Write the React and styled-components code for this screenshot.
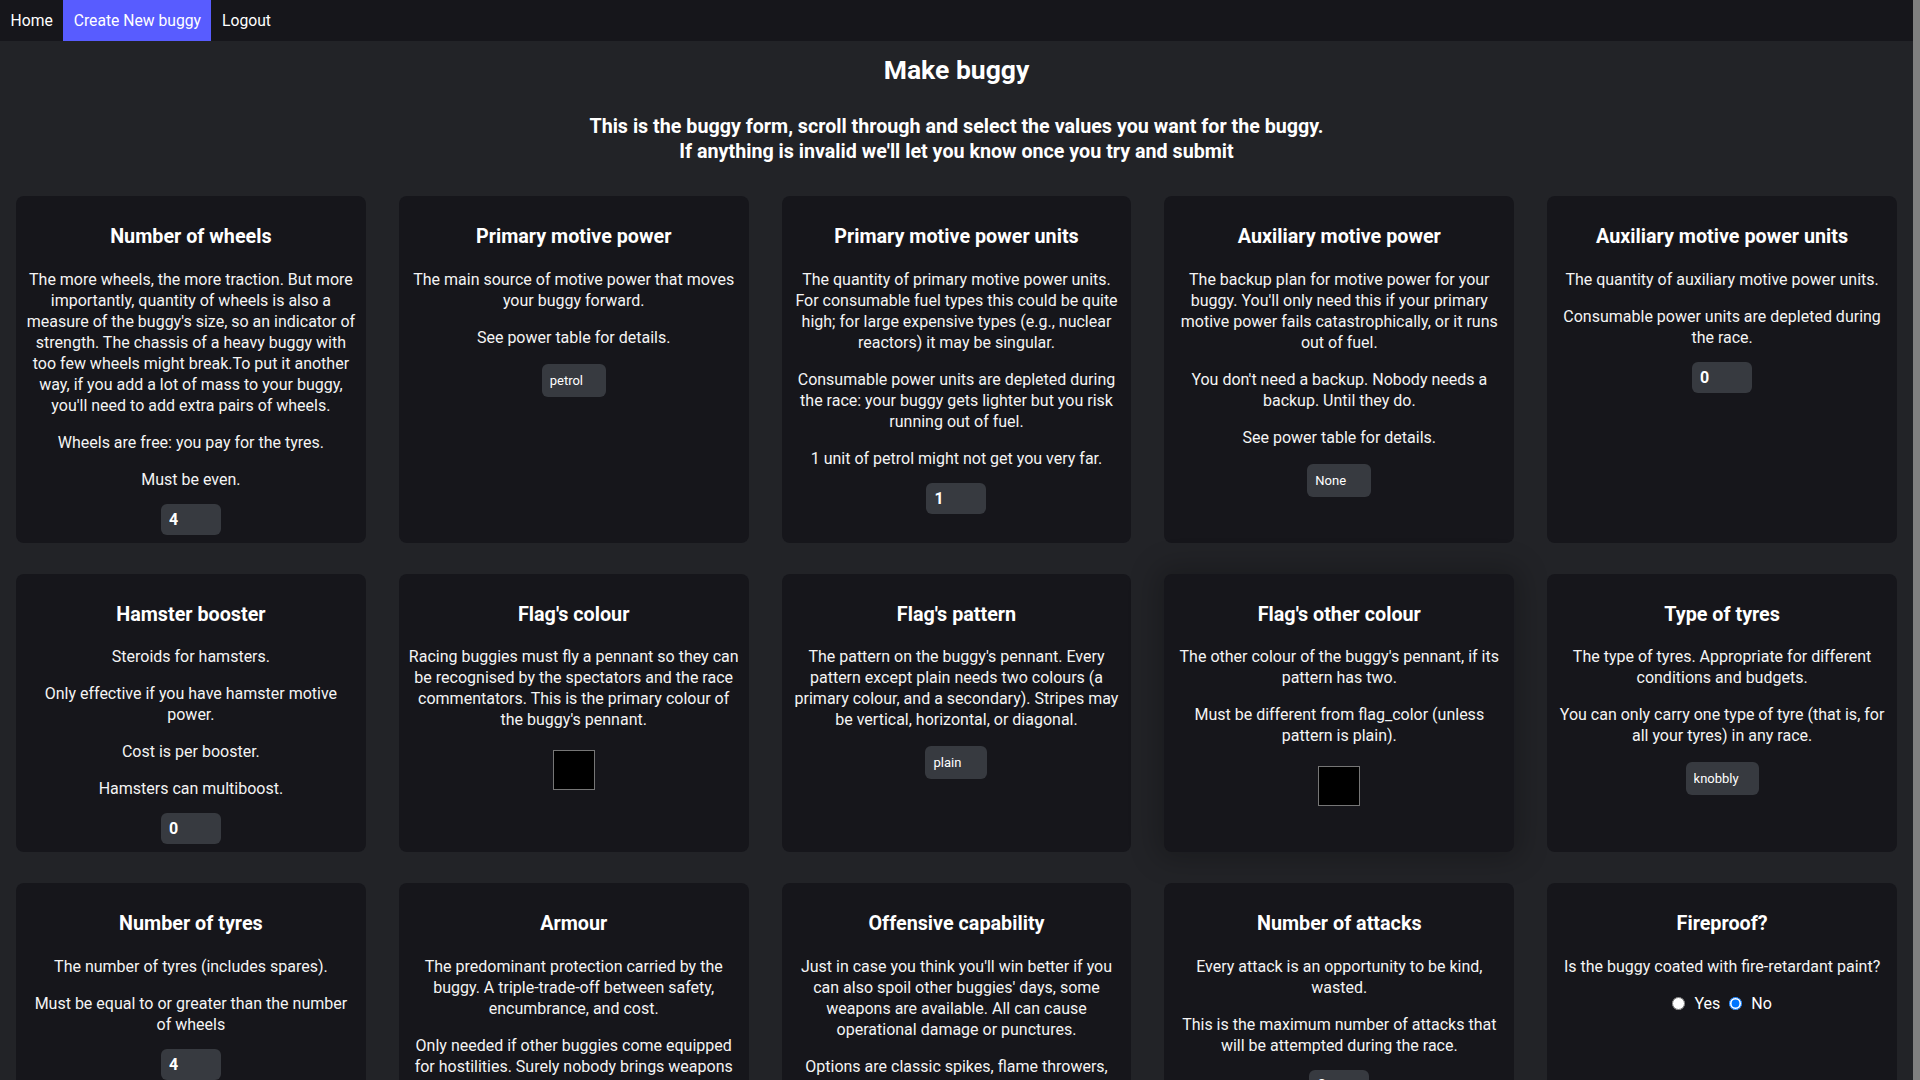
import React from "react";
import styled, { createGlobalStyle } from "styled-components";

const FONT = `"Segoe UI", Roboto, "Noto Sans", "Liberation Sans", sans-serif`;

const GlobalStyle = createGlobalStyle`
  html {
    margin: 0;
    padding: 0;
    background: #222327 linear-gradient(to left, #7f7f7f 7px, #222327 7px) fixed;
  }
  body { margin: 0; padding: 0; font-family: ${FONT}; color: #fff; }
  * { box-sizing: border-box; }
`;

const Page = styled.div`
  margin-right: 7px;
  background: #222327;
  min-height: 100vh;
`;

const NavBar = styled.nav`
  display: flex;
  height: 41px;
  background: #16161b;
`;

const NavLink = styled.a`
  display: flex;
  align-items: center;
  padding: 0 10.5px;
  font-size: 15.7px;
  color: #fff;
  text-decoration: none;
  background: ${(p) => (p.$active ? "#585cff" : "transparent")};
`;

const Main = styled.main`
  padding: 0 16px 40px;
`;

const PageTitle = styled.h1`
  margin: 13px 0 0;
  text-align: center;
  font-size: 26.5px;
  line-height: 32px;
  font-weight: 700;
`;

const Intro = styled.p`
  margin: 27.5px 0 0;
  text-align: center;
  font-size: 19.7px;
  line-height: 25px;
  font-weight: 700;
`;

const Grid = styled.div`
  display: grid;
  grid-template-columns: repeat(5, 1fr);
  column-gap: 33px;
  row-gap: 31px;
  margin-top: 32.5px;
`;

const Card = styled.section`
  background: #16161b;
  border-radius: 8px;
  padding: 29px 8px 8px;
  text-align: center;
  box-shadow: ${(p) => (p.$raised ? "0 0 28px 8px rgba(0,0,0,0.22)" : "none")};
`;

const CardTitle = styled.h2`
  margin: 0 0 19.5px;
  font-size: 19.75px;
  line-height: 24px;
  font-weight: 700;
`;

const Text = styled.p`
  margin: 0 0 16px;
  font-size: 16px;
  line-height: 21px;
  color: #f4f4f4;
`;

const Field = styled.div`
  display: flex;
  justify-content: center;
  align-items: center;
  gap: 9px;
  font-size: 16px;
  line-height: 21px;
`;

const NumberInput = styled.input`
  width: 60px;
  height: 31px;
  margin-top: -2px;
  border: none;
  border-radius: 6px;
  background: #373a40;
  color: #fff;
  font: 700 16px ${FONT};
  padding: 0 8px;
  outline: none;
`;

const Select = styled.select`
  appearance: none;
  -webkit-appearance: none;
  width: ${(p) => p.$w}px;
  height: 33px;
  border: none;
  border-radius: 6px;
  background: #373a40;
  color: #fff;
  font: 400 13px ${FONT};
  padding: 0 8px;
  outline: none;
`;

const Swatch = styled.input`
  -webkit-appearance: none;
  appearance: none;
  width: 42px;
  height: 40px;
  margin-top: 4px;
  padding: 0;
  border: 1px solid #767676;
  background: #000;
  &::-webkit-color-swatch-wrapper { padding: 0; }
  &::-webkit-color-swatch { border: none; }
`;

const RadioLabel = styled.label`
  display: inline-flex;
  align-items: center;
  gap: 9px;
`;

const Radio = styled.input`
  width: 13px;
  height: 13px;
  margin: 0;
  accent-color: #0075ff;
`;

const cards = [
  { title: "Number of wheels", text: ["The more wheels, the more traction. But more importantly, quantity of wheels is also a measure of the buggy's size, so an indicator of strength. The chassis of a heavy buggy with too few wheels might break.To put it another way, if you add a lot of mass to your buggy, you'll need to add extra pairs of wheels.", "Wheels are free: you pay for the tyres.", "Must be even."], kind: "number", value: 4 },
  { title: "Primary motive power", text: ["The main source of motive power that moves your buggy forward.", "See power table for details."], kind: "select", value: "petrol", w: 64, options: ["petrol", "fusion", "steam", "bio", "electric", "rocket", "hamster", "thermo", "solar", "wind"] },
  { title: "Primary motive power units", text: ["The quantity of primary motive power units. For consumable fuel types this could be quite high; for large expensive types (e.g., nuclear reactors) it may be singular.", "Consumable power units are depleted during the race: your buggy gets lighter but you risk running out of fuel.", "1 unit of petrol might not get you very far."], kind: "number", value: 1 },
  { title: "Auxiliary motive power", text: ["The backup plan for motive power for your buggy. You'll only need this if your primary motive power fails catastrophically, or it runs out of fuel.", "You don't need a backup. Nobody needs a backup. Until they do.", "See power table for details."], kind: "select", value: "None", w: 64, options: ["None", "petrol", "fusion", "steam", "bio", "electric", "rocket", "hamster", "thermo", "solar", "wind"] },
  { title: "Auxiliary motive power units", text: ["The quantity of auxiliary motive power units.", "Consumable power units are depleted during the race."], kind: "number", value: 0 },
  { title: "Hamster booster", text: ["Steroids for hamsters.", "Only effective if you have hamster motive power.", "Cost is per booster.", "Hamsters can multiboost."], kind: "number", value: 0 },
  { title: "Flag's colour", text: ["Racing buggies must fly a pennant so they can be recognised by the spectators and the race commentators. This is the primary colour of the buggy's pennant."], kind: "color" },
  { title: "Flag's pattern", text: ["The pattern on the buggy's pennant. Every pattern except plain needs two colours (a primary colour, and a secondary). Stripes may be vertical, horizontal, or diagonal."], kind: "select", value: "plain", w: 62, options: ["plain", "vstripe", "hstripe", "dstripe", "checker", "spot"] },
  { title: "Flag's other colour", text: ["The other colour of the buggy's pennant, if its pattern has two.", "Must be different from flag_color (unless pattern is plain)."], kind: "color", raised: true },
  { title: "Type of tyres", text: ["The type of tyres. Appropriate for different conditions and budgets.", "You can only carry one type of tyre (that is, for all your tyres) in any race."], kind: "select", value: "knobbly", w: 73, options: ["knobbly", "slick", "steelband", "reactive", "maglev"] },
  { title: "Number of tyres", text: ["The number of tyres (includes spares).", "Must be equal to or greater than the number of\u00a0wheels"], kind: "number", value: 4 },
  { title: "Armour", text: ["The predominant protection carried by the buggy. A triple-trade-off between safety, encumbrance, and cost.", "Only needed if other buggies come equipped for hostilities. Surely nobody brings weapons to a friendly race?"], kind: "select", value: "none", w: 62, options: ["none", "wood", "aluminium", "thinsteel", "thicksteel", "titanium"] },
  { title: "Offensive capability", text: ["Just in case you think you'll win better if you can also spoil other buggies' days, some weapons are available. All can cause operational damage or punctures.", "Options are classic spikes, flame throwers, charge weapons, or biohazards."], kind: "select", value: "none", w: 62, options: ["none", "spike", "flame", "charge", "biohazard"] },
  { title: "Number of attacks", text: ["Every attack is an opportunity to be kind, wasted.", "This is the maximum number of attacks that will be attempted during the race."], kind: "number", value: 0 },
  { title: "Fireproof?", text: ["Is the buggy coated with fire-retardant paint?"], kind: "radio" },
];

function Control({ card, index }) {
  if (card.kind === "number") {
    return <NumberInput type="number" defaultValue={card.value} />;
  }
  if (card.kind === "select") {
    return (
      <Select $w={card.w} defaultValue={card.value}>
        {card.options.map((o) => (
          <option key={o} value={o}>{o}</option>
        ))}
      </Select>
    );
  }
  if (card.kind === "color") {
    return <Swatch type="color" defaultValue="#000000" />;
  }
  return (
    <>
      <RadioLabel>
        <Radio type="radio" name={`r${index}`} value="yes" />
        Yes
      </RadioLabel>
      <RadioLabel>
        <Radio type="radio" name={`r${index}`} value="no" defaultChecked />
        No
      </RadioLabel>
    </>
  );
}

export default function App() {
  return (
    <Page>
      <GlobalStyle />
      <NavBar>
        <NavLink href="#">Home</NavLink>
        <NavLink href="#" $active>Create New buggy</NavLink>
        <NavLink href="#">Logout</NavLink>
      </NavBar>
      <Main>
        <PageTitle>Make buggy</PageTitle>
        <Intro>
          This is the buggy form, scroll through and select the values you want for the buggy.
          <br />
          If anything is invalid we'll let you know once you try and submit
        </Intro>
        <Grid>
          {cards.map((card, i) => (
            <Card key={card.title} $raised={card.raised}>
              <CardTitle>{card.title}</CardTitle>
              {card.text.map((t) => (
                <Text key={t}>{t}</Text>
              ))}
              <Field>
                <Control card={card} index={i} />
              </Field>
            </Card>
          ))}
        </Grid>
      </Main>
    </Page>
  );
}
